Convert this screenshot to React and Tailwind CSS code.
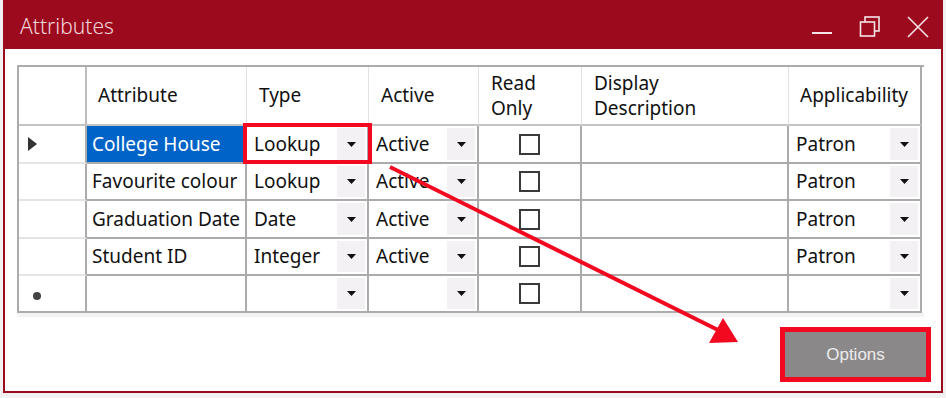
import React from 'react';

const rows = [
  { attr: 'College House', type: 'Lookup', active: 'Active', app: 'Patron', current: true },
  { attr: 'Favourite colour', type: 'Lookup', active: 'Active', app: 'Patron' },
  { attr: 'Graduation Date', type: 'Date', active: 'Active', app: 'Patron' },
  { attr: 'Student ID', type: 'Integer', active: 'Active', app: 'Patron' },
  { attr: '', type: '', active: '', app: '', isNew: true },
];

const heights = ['h-[38px]', 'h-[37px]', 'h-[38px]', 'h-[37px]', 'h-[37px]'];

const DropArrow = () => (
  <div className="w-[28px] self-stretch my-[2px] mr-[2px] bg-[#f4f1f5] flex items-center justify-center">
    <svg width="9" height="5" viewBox="0 0 9 5">
      <polygon points="0,0 9,0 4.5,5" fill="#111" />
    </svg>
  </div>
);

const ComboCell = ({ value, width, children }) => (
  <div className={`${width} relative flex items-center border-r-2 border-b-2 border-[#ababab]`}>
    <span className="flex-1 pl-[7px] text-[19px] text-[#111] whitespace-nowrap overflow-hidden">{value}</span>
    <DropArrow />
    {children}
  </div>
);

export default function App() {
  return (
    <div className="relative w-[946px] h-[398px] bg-[#f1f1f1] font-['Noto_Sans',sans-serif] overflow-hidden">
      <div className="ml-[3px] w-[940px] h-[393px] flex flex-col bg-white border-x-2 border-b-2 border-[#9c0a1e]">
        {/* Title bar */}
        <div className="h-[49px] shrink-0 bg-[#9c0a1e] flex items-center justify-between pl-[15px] pr-[12px]">
          <span className="text-[21px] font-light text-[#f3d6da] mt-[5px]">Attributes</span>
          <div className="flex items-center gap-[26px] mt-[4px]">
            <svg width="22" height="22" viewBox="0 0 22 22">
              <line x1="1" y1="17" x2="21" y2="17" stroke="#f6e4e6" strokeWidth="2" />
            </svg>
            <svg width="22" height="22" viewBox="0 0 22 22">
              <rect x="6" y="1" width="14" height="14" fill="none" stroke="#f6e4e6" strokeWidth="1.6" />
              <rect x="1.5" y="6" width="14" height="14" fill="#9c0a1e" stroke="#f6e4e6" strokeWidth="1.6" />
            </svg>
            <svg width="22" height="22" viewBox="0 0 22 22">
              <path d="M1 1 L21 21 M21 1 L1 21" stroke="#f6e4e6" strokeWidth="1.6" />
            </svg>
          </div>
        </div>

        {/* Content */}
        <div className="flex-1 flex flex-col pl-[12px] pt-[16px] pr-[10px]">
          <div className="w-[907px] border-l-2 border-t-2 border-[#ababab] shadow-[0_4px_0_#f3f3f3] text-[#111]">
            {/* Header */}
            <div className="flex h-[59px] text-[19px] leading-[25px]">
              <div className="w-[68px] border-r-2 border-b-2 border-r-[#bdbdbd] border-b-[#c4c4c4]" />
              <div className="w-[160px] flex items-center pl-[11px] border-r border-b-2 border-r-[#e2e2e2] border-b-[#c4c4c4]">Attribute</div>
              <div className="w-[122px] flex items-center pl-[12px] border-r border-b-2 border-r-[#e2e2e2] border-b-[#c4c4c4]">Type</div>
              <div className="w-[110px] flex items-center pl-[12px] border-r border-b-2 border-r-[#e2e2e2] border-b-[#c4c4c4]">Active</div>
              <div className="w-[103px] flex items-center pl-[12px] border-r border-b-2 border-r-[#e2e2e2] border-b-[#c4c4c4]">Read<br />Only</div>
              <div className="w-[207px] flex items-center pl-[12px] border-r border-b-2 border-r-[#e2e2e2] border-b-[#c4c4c4]">Display<br />Description</div>
              <div className="w-[133px] flex items-center pl-[11px] border-r-2 border-b-2 border-r-[#ababab] border-b-[#c4c4c4] whitespace-nowrap">Applicability</div>
            </div>

            {/* Rows */}
            {rows.map((r, i) => (
              <div key={i} className={`flex ${heights[i]}`}>
                <div className={`w-[68px] flex items-center border-r-2 border-r-[#ababab] border-b-2 ${i === rows.length - 1 ? 'border-b-[#ababab]' : 'border-b-[#e4e4e4]'}`}>
                  {r.current && (
                    <svg className="ml-[9px]" width="9" height="14" viewBox="0 0 9 14">
                      <polygon points="0,0 9,7 0,14" fill="#333" />
                    </svg>
                  )}
                  {r.isNew && <div className="ml-[14px] mt-[4px] w-[8px] h-[8px] rounded-full bg-[#444]" />}
                </div>
                <div className="w-[160px] border-r-2 border-b-2 border-[#ababab] flex">
                  <div className={`flex-1 flex items-center pl-[5px] text-[19px] whitespace-nowrap overflow-hidden ${r.current ? 'bg-[#0063c7] text-white' : ''}`}>
                    {r.attr}
                  </div>
                </div>
                <ComboCell value={r.type} width="w-[122px]">
                  {r.current && (
                    <div className="absolute -left-[4px] -top-[3px] -right-[5px] -bottom-[2px] border-[4px] border-[#f2081f] z-10" />
                  )}
                </ComboCell>
                <ComboCell value={r.active} width="w-[110px]" />
                <div className="w-[103px] border-r-2 border-b-2 border-[#ababab] flex items-center justify-center">
                  <div className="w-[21px] h-[21px] border-2 border-[#3a3a3a] bg-white" />
                </div>
                <div className="w-[207px] border-r-2 border-b-2 border-[#ababab]" />
                <ComboCell value={r.app} width="w-[133px]" />
              </div>
            ))}
          </div>

          {/* Options button */}
          <div className="flex justify-end mt-[14px]">
            <div className="border-[5px] border-[#f2081f]">
              <button className="w-[141px] h-[45px] bg-[#8a8889] text-[#ececec] text-[17px] font-['Liberation_Sans',sans-serif]">
                Options
              </button>
            </div>
          </div>
        </div>
      </div>

      {/* Annotation arrow */}
      <svg className="absolute left-0 top-0 pointer-events-none" width="946" height="398" viewBox="0 0 946 398">
        <line x1="390" y1="167" x2="720" y2="331" stroke="#f2081f" strokeWidth="4" />
        <polygon points="738,342 709,343 723,318" fill="#f2081f" />
      </svg>
    </div>
  );
}
